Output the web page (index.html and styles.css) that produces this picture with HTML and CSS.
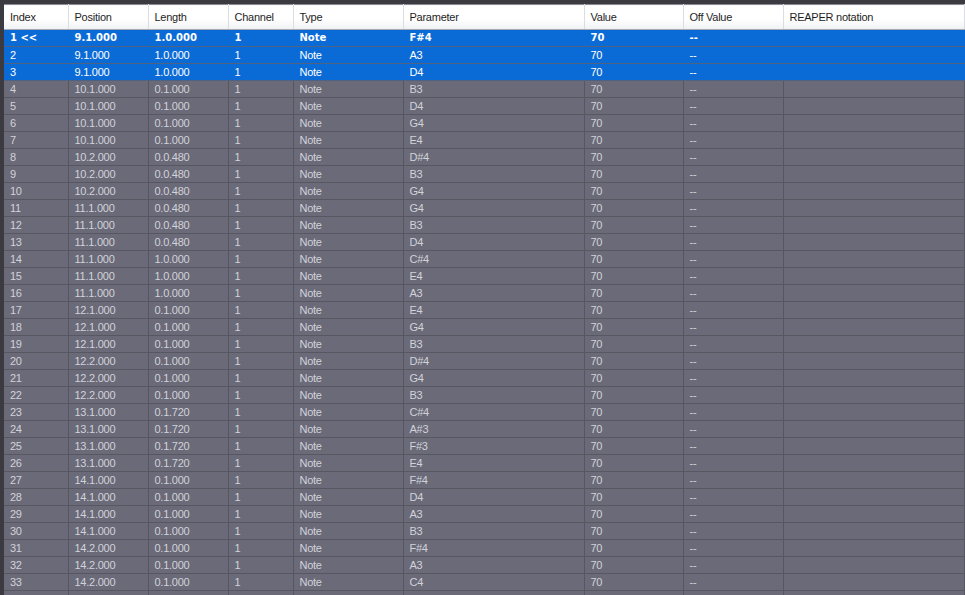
FILE: index.html
```html
<!DOCTYPE html>
<html>
<head>
<meta name="viewport" content="width=device-width, initial-scale=1">
<link rel="stylesheet" href="styles.css">
</head>
<body>
<div class="frame">
<table class="events">
  <colgroup>
    <col class="c-index"><col class="c-pos"><col class="c-len"><col class="c-chan"><col class="c-type">
    <col class="c-param"><col class="c-val"><col class="c-off"><col class="c-notation">
  </colgroup>
  <thead>
    <tr><th>Index</th><th>Position</th><th>Length</th><th>Channel</th><th>Type</th><th>Parameter</th><th>Value</th><th>Off Value</th><th>REAPER notation</th></tr>
  </thead>
  <tbody>
    <tr class="sel current"><td>1 &lt;&lt;</td><td>9.1.000</td><td>1.0.000</td><td>1</td><td>Note</td><td>F#4</td><td>70</td><td>--</td><td></td></tr>
    <tr class="sel"><td>2</td><td>9.1.000</td><td>1.0.000</td><td>1</td><td>Note</td><td>A3</td><td>70</td><td>--</td><td></td></tr>
    <tr class="sel"><td>3</td><td>9.1.000</td><td>1.0.000</td><td>1</td><td>Note</td><td>D4</td><td>70</td><td>--</td><td></td></tr>
    <tr><td>4</td><td>10.1.000</td><td>0.1.000</td><td>1</td><td>Note</td><td>B3</td><td>70</td><td>--</td><td></td></tr>
    <tr><td>5</td><td>10.1.000</td><td>0.1.000</td><td>1</td><td>Note</td><td>D4</td><td>70</td><td>--</td><td></td></tr>
    <tr><td>6</td><td>10.1.000</td><td>0.1.000</td><td>1</td><td>Note</td><td>G4</td><td>70</td><td>--</td><td></td></tr>
    <tr><td>7</td><td>10.1.000</td><td>0.1.000</td><td>1</td><td>Note</td><td>E4</td><td>70</td><td>--</td><td></td></tr>
    <tr><td>8</td><td>10.2.000</td><td>0.0.480</td><td>1</td><td>Note</td><td>D#4</td><td>70</td><td>--</td><td></td></tr>
    <tr><td>9</td><td>10.2.000</td><td>0.0.480</td><td>1</td><td>Note</td><td>B3</td><td>70</td><td>--</td><td></td></tr>
    <tr><td>10</td><td>10.2.000</td><td>0.0.480</td><td>1</td><td>Note</td><td>G4</td><td>70</td><td>--</td><td></td></tr>
    <tr><td>11</td><td>11.1.000</td><td>0.0.480</td><td>1</td><td>Note</td><td>G4</td><td>70</td><td>--</td><td></td></tr>
    <tr><td>12</td><td>11.1.000</td><td>0.0.480</td><td>1</td><td>Note</td><td>B3</td><td>70</td><td>--</td><td></td></tr>
    <tr><td>13</td><td>11.1.000</td><td>0.0.480</td><td>1</td><td>Note</td><td>D4</td><td>70</td><td>--</td><td></td></tr>
    <tr><td>14</td><td>11.1.000</td><td>1.0.000</td><td>1</td><td>Note</td><td>C#4</td><td>70</td><td>--</td><td></td></tr>
    <tr><td>15</td><td>11.1.000</td><td>1.0.000</td><td>1</td><td>Note</td><td>E4</td><td>70</td><td>--</td><td></td></tr>
    <tr><td>16</td><td>11.1.000</td><td>1.0.000</td><td>1</td><td>Note</td><td>A3</td><td>70</td><td>--</td><td></td></tr>
    <tr><td>17</td><td>12.1.000</td><td>0.1.000</td><td>1</td><td>Note</td><td>E4</td><td>70</td><td>--</td><td></td></tr>
    <tr><td>18</td><td>12.1.000</td><td>0.1.000</td><td>1</td><td>Note</td><td>G4</td><td>70</td><td>--</td><td></td></tr>
    <tr><td>19</td><td>12.1.000</td><td>0.1.000</td><td>1</td><td>Note</td><td>B3</td><td>70</td><td>--</td><td></td></tr>
    <tr><td>20</td><td>12.2.000</td><td>0.1.000</td><td>1</td><td>Note</td><td>D#4</td><td>70</td><td>--</td><td></td></tr>
    <tr><td>21</td><td>12.2.000</td><td>0.1.000</td><td>1</td><td>Note</td><td>G4</td><td>70</td><td>--</td><td></td></tr>
    <tr><td>22</td><td>12.2.000</td><td>0.1.000</td><td>1</td><td>Note</td><td>B3</td><td>70</td><td>--</td><td></td></tr>
    <tr><td>23</td><td>13.1.000</td><td>0.1.720</td><td>1</td><td>Note</td><td>C#4</td><td>70</td><td>--</td><td></td></tr>
    <tr><td>24</td><td>13.1.000</td><td>0.1.720</td><td>1</td><td>Note</td><td>A#3</td><td>70</td><td>--</td><td></td></tr>
    <tr><td>25</td><td>13.1.000</td><td>0.1.720</td><td>1</td><td>Note</td><td>F#3</td><td>70</td><td>--</td><td></td></tr>
    <tr><td>26</td><td>13.1.000</td><td>0.1.720</td><td>1</td><td>Note</td><td>E4</td><td>70</td><td>--</td><td></td></tr>
    <tr><td>27</td><td>14.1.000</td><td>0.1.000</td><td>1</td><td>Note</td><td>F#4</td><td>70</td><td>--</td><td></td></tr>
    <tr><td>28</td><td>14.1.000</td><td>0.1.000</td><td>1</td><td>Note</td><td>D4</td><td>70</td><td>--</td><td></td></tr>
    <tr><td>29</td><td>14.1.000</td><td>0.1.000</td><td>1</td><td>Note</td><td>A3</td><td>70</td><td>--</td><td></td></tr>
    <tr><td>30</td><td>14.1.000</td><td>0.1.000</td><td>1</td><td>Note</td><td>B3</td><td>70</td><td>--</td><td></td></tr>
    <tr><td>31</td><td>14.2.000</td><td>0.1.000</td><td>1</td><td>Note</td><td>F#4</td><td>70</td><td>--</td><td></td></tr>
    <tr><td>32</td><td>14.2.000</td><td>0.1.000</td><td>1</td><td>Note</td><td>A3</td><td>70</td><td>--</td><td></td></tr>
    <tr><td>33</td><td>14.2.000</td><td>0.1.000</td><td>1</td><td>Note</td><td>C4</td><td>70</td><td>--</td><td></td></tr>
    <tr><td></td><td></td><td></td><td></td><td></td><td></td><td></td><td></td><td></td></tr>
  </tbody>
</table>
</div>
</body>
</html>
```
FILE: styles.css
```css
/* page = dark window chrome round the list view */
body {
  margin: 0;
  background: #3a3a40;
  font-family: "Liberation Sans", Arial, sans-serif;
  font-size: 11px;
  letter-spacing: -0.25px;
  overflow: hidden;
}

.frame {
  padding: 4px 0 0 4px;
}

.events {
  border-collapse: collapse;
  table-layout: fixed;
  width: 960px;
  border-top: 1px solid #8c8c94;
  border-right: 1px solid #8c8c94;
}

.c-index { width: 64px; }
.c-pos { width: 80px; }
.c-len { width: 80px; }
.c-chan { width: 65px; }
.c-type { width: 110px; }
.c-param { width: 181px; }
.c-val { width: 99px; }
.c-off { width: 100px; }
.c-notation { width: 181px; }

/* column headers */
.events th {
  height: 24px;
  padding: 0 0 0 6px;
  text-align: left;
  font-weight: normal;
  color: #1e1e1e;
  background: linear-gradient(#ffffff, #ffffff 55%, #f0f1f4);
  border-right: 1px solid #dcdde2;
  border-bottom: 1px solid #a9a9b0;
  white-space: nowrap;
  overflow: hidden;
}

/* rows */
.events td {
  height: 16px;
  padding: 0 0 0 6px;
  line-height: 16px;
  color: #d2d2da;
  background: #6a6a78;
  border-right: 1px solid #575762;
  border-bottom: 1px solid #575762;
  white-space: nowrap;
  overflow: hidden;
}

.events tr.sel td {
  color: #ffffff;
  background: #0b6bd6;
  border-right-color: #0b6bd6;
  border-bottom-color: #4f6282;
}

.events tr.current td {
  font-family: "DejaVu Sans", Verdana, sans-serif;
  font-weight: bold;
  font-size: 10px;
  letter-spacing: 0;
}
```
